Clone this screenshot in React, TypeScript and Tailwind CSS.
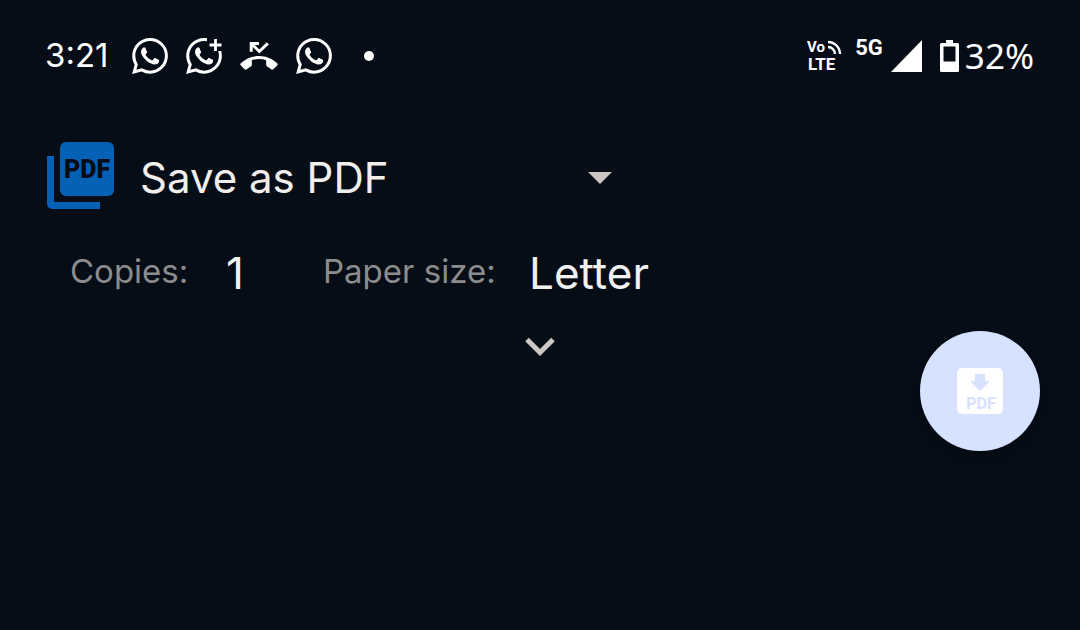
import { useState } from "react"
import { SiWhatsapp } from "react-icons/si"


function WhatsappPlus() {
  return (
    <svg viewBox="0 0 36 36" className="w-9 h-9" aria-hidden="true">
      <SiWhatsapp size={36} fill="#fff" />
      <rect x="21" y="-1" width="16" height="14" fill="#060d16" />
      <path d="M29.5 1v12M23.5 7h12" stroke="#fff" strokeWidth="2.8" />
    </svg>
  )
}

function MissedCall() {
  return (
    <svg viewBox="0 3 24 18" className="w-[38px] h-7" fill="#fff" aria-hidden="true">
      <path d="M23.71 16.67C20.66 13.78 16.54 12 12 12 7.46 12 3.34 13.78.29 16.67c-.18.18-.29.43-.29.71s.11.53.29.71l2.48 2.48c.18.18.43.29.71.29.27 0 .52-.11.7-.28.79-.74 1.69-1.36 2.66-1.85.33-.16.56-.51.56-.9v-3.1C8.85 14.25 10.4 14 12 14s3.15.25 4.6.72v3.1c0 .4.23.74.56.9.98.49 1.87 1.12 2.66 1.85.18.18.43.28.7.28.28 0 .53-.11.71-.29l2.48-2.48c.18-.18.29-.43.29-.71s-.12-.52-.3-.7z" />
      <path d="M7 9.200V3.900h5M7 3.900l5.200 5.200 5.500-5.200" fill="none" stroke="#fff" strokeWidth="1.900" />
    </svg>
  )
}

function VoLte() {
  return (
    <svg viewBox="0 0 36 36" className="w-9 h-9" fill="#fff" role="img" aria-label="VoLTE">
      <g className="font-['Roboto'] font-bold">
        <text x="0" y="14" fontSize="15">Vo</text>
        <text x="1" y="32" fontSize="17">LTE</text>
      </g>
      <path d="M21 4a12 12 0 0 1 12 12M21 9a7 7 0 0 1 7 7" fill="none" stroke="#fff" strokeWidth="2.400" />
    </svg>
  )
}

function Battery() {
  return (
    <svg viewBox="0 0 19 32" className="w-[19px] h-8" fill="#fff" aria-hidden="true">
      <path
        fillRule="evenodd"
        d="M6 0h7v3h4.500q1.500 0 1.500 1.500v26q0 1.500-1.500 1.500h-16q-1.500 0-1.500-1.500v-26q0-1.500 1.500-1.500H6zM3.500 6.500v15h12v-15z"
      />
    </svg>
  )
}

function PdfPrinter() {
  return (
    <svg viewBox="0 0 67 67" className="w-[67px] h-[67px] shrink-0" aria-hidden="true">
      <rect x="13" y="0" width="54" height="54" rx="6" fill="#0461b5" />
      <path d="M0 14h7v46h46v7H6q-6 0-6-6z" fill="#0461b5" />
      <text x="40" y="36" textAnchor="middle" fontSize="25" fill="#060d16" className="font-['Roboto'] font-black">
        PDF
      </text>
    </svg>
  )
}

function StatusBar() {
  return (
    <header className="flex items-center justify-between h-28 pl-[45px] pr-[46px] text-[33px]">
      <div className="flex items-center gap-[18px]">
        <span className="w-[69px]">3:21</span>
        <SiWhatsapp className="w-9 h-9" />
        <WhatsappPlus />
        <MissedCall />
        <SiWhatsapp className="w-9 h-9" />
        <span className="w-[10px] h-[10px] ml-[14px] rounded-full bg-white" />
      </div>
      <div className="flex items-center">
        <VoLte />
        <span className="ml-3 mb-4 text-[22px] leading-6 font-bold font-['Roboto']">5G</span>
        <svg viewBox="0 0 31 32" className="w-[31px] h-8 ml-2" fill="#fff" aria-hidden="true">
          <path d="M31 0v32H0z" />
        </svg>
        <div className="flex items-center gap-[6px] ml-[18px] text-[35px] font-['Noto_Sans']">
          <Battery />
          <span>32%</span>
        </div>
      </div>
    </header>
  )
}


export default function App() {
  const [copies, setCopies] = useState("1")
  const [expanded, setExpanded] = useState(false)

  return (
    <div className="min-h-screen bg-[#060d16] text-white font-['Inter',sans-serif]">
      <StatusBar />

      <main className="pt-[30px]">
        <div className="flex items-center gap-[26px] w-full max-w-[612px] pl-[47px]">
          <PdfPrinter />
          <div className="grid flex-1 items-center pt-1">
            <select
              aria-label="Printer"
              className="col-start-1 row-start-1 appearance-none bg-transparent text-[42px] leading-[56px] text-[#f1eeec]"
            >
              <option>Save as PDF</option>
            </select>
            <svg viewBox="0 0 24 12" className="col-start-1 row-start-1 w-6 h-3 justify-self-end pointer-events-none" fill="#cbc6c1" aria-hidden="true">
              <path d="M0 0h24L12 12z" />
            </svg>
          </div>
        </div>

        <div className="flex items-center h-[60px] mt-[34px] pl-[70px] text-[33px] text-[#8c8c8c]">
          <label htmlFor="copies" className="w-[156px] pb-[2px]">Copies:</label>
          <input
            id="copies"
            value={copies}
            inputMode="numeric"
            onChange={(e) => setCopies(e.target.value)}
            className="w-[97px] bg-transparent text-[44px] leading-[56px] text-[#f1f1f1] outline-none"
          />
          <label htmlFor="paper" className="w-[206px] pb-[2px]">Paper size:</label>
          <select id="paper" className="appearance-none bg-transparent text-[44px] leading-[56px] text-[#f1f1f1]">
            <option>Letter</option>
          </select>
        </div>

        <div className="grid grid-cols-[120px_1fr_120px] items-start mt-7 px-10">
          <button
            aria-label="More options"
            aria-expanded={expanded}
            onClick={() => setExpanded(!expanded)}
            className="col-start-2 justify-self-center pt-[6px]"
          >
            <svg viewBox="0 0 30 20" className="w-[30px] h-5" fill="none" stroke="#cbc8c3" strokeWidth="5">
              <path d="M2 2.500L15 15.500L28 2.500" />
            </svg>
          </button>
          <button
            aria-label="Save PDF"
            className="col-start-3 flex items-center justify-center w-[120px] h-[120px] rounded-full bg-[#d6e2ff] shadow-lg"
          >
            <svg viewBox="0 0 46 46" className="w-[46px] h-[46px]" aria-hidden="true">
              <rect width="46" height="46" rx="5" fill="#fff" />
              <path d="M18 6h10v7h5L23 23L13 13h5z" fill="#d6e2ff" />
              <text x="24" y="41" textAnchor="middle" fontSize="16" fill="#d6e2ff" className="font-['Roboto'] font-bold">
                PDF
              </text>
            </svg>
          </button>
        </div>
      </main>
    </div>
  )
}
